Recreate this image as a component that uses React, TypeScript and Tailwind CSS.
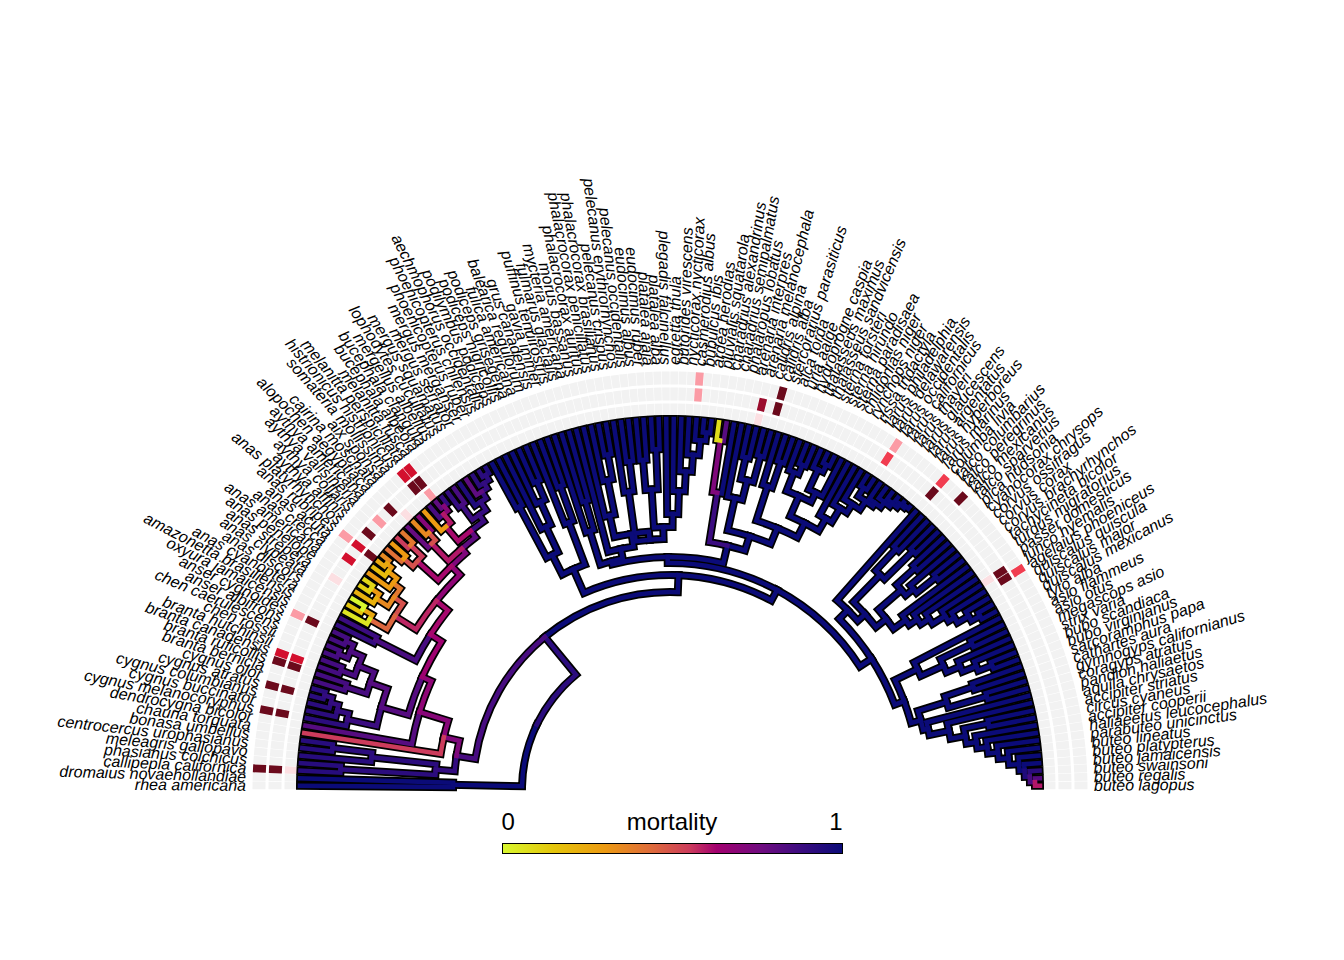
import React from 'react';

// fan phylogeny, mortality coloured branches + 3-column heatmap ring
const CX = 670;
const CY = 789;
const TIP_R = 370;
const LABEL_R = 424;

const TIPS = [
  'rhea americana', 'dromaius novaehollandiae', 'callipepla californica', 'phasianus colchicus',
  'meleagris gallopavo', 'centrocercus urophasianus', 'bonasa umbellus', 'chauna torquata',
  'dendrocygna bicolor', 'cygnus melanocoryphus', 'cygnus buccinator', 'cygnus columbianus',
  'cygnus atratus', 'cygnus olor', 'branta bernicla', 'branta ruficollis', 'branta canadensis',
  'branta hutchinsii', 'chen rossii', 'chen caerulescens', 'anser albifrons', 'anser cygnoides',
  'oxyura jamaicensis', 'amazonetta brasiliensis', 'anas cyanoptera', 'anas discors',
  'anas clypeata', 'anas strepera', 'anas penelope', 'anas americana', 'anas crecca',
  'anas acuta', 'anas rubripes', 'anas platyrhynchos', 'aythya affinis', 'aythya collaris',
  'aythya valisineria', 'aythya americana', 'alopochen aegyptiaca', 'cairina moschata',
  'aix sponsa', 'somateria mollissima', 'histrionicus histrionicus', 'melanitta perspicillata',
  'melanitta fusca', 'bucephala albeola', 'bucephala clangula', 'mergellus albellus',
  'lophodytes cucullatus', 'mergus squamatus', 'mergus serrator', 'mergus merganser',
  'phoenicopterus ruber', 'phoenicopterus chilensis', 'aechmophorus occidentalis',
  'podilymbus podiceps', 'podiceps nigricollis', 'podiceps grisegena', 'fulica americana',
  'balearica regulorum', 'grus canadensis', 'gavia immer', 'puffinus tenuirostris',
  'fulmarus glacialis', 'mycteria americana', 'morus bassanus', 'phalacrocorax auritus',
  'phalacrocorax penicillatus', 'phalacrocorax brasilianus', 'pelecanus crispus',
  'pelecanus erythrorhynchos', 'pelecanus occidentalis', 'eudocimus albus', 'eudocimus ruber',
  'platalea ajaja', 'platalea alba', 'plegadis falcinellus', 'egretta thula',
  'butorides virescens', 'nycticorax nycticorax', 'casmerodius albus', 'bubulcus ibis',
  'ardea herodias', 'pluvialis squatarola',
  'charadrius alexandrinus', 'charadrius semipalmatus', 'phalaropus lobatus',
  'arenaria interpres', 'arenaria melanocephala', 'calidris alpina', 'calidris alba',
  'stercorarius parasiticus', 'alca torda', 'uria aalge', 'hydroprogne caspia',
  'thalasseus maximus', 'thalasseus sandvicensis', 'sterna forsteri', 'sterna hirundo',
  'sterna paradisaea', 'chlidonias niger', 'rynchops niger', 'rissa tridactyla',
  'larus philadelphia', 'larus delawarensis', 'larus occidentalis', 'larus californicus',
  'larus thayeri', 'larus glaucescens', 'larus argentatus', 'larus hyperboreus', 'larus marinus',
  'columba livia', 'falco columbarius', 'falco peregrinus', 'falco mexicanus',
  'falco sparverius', 'pica hudsonia', 'cyanocorax chrysops', 'corvus ossifragus',
  'corvus corax', 'corvus brachyrhynchos', 'tachycineta bicolor', 'turdus migratorius',
  'passer domesticus', 'junco hyemalis', 'agelaius phoeniceus', 'quiscalus quiscula',
  'quiscalus major', 'quiscalus mexicanus', 'tyto alba', 'asio flammeus', 'asio otus',
  'megascops asio', 'strix varia', 'bubo scandiaca', 'bubo virginianus', 'sarcoramphus papa',
  'cathartes aura', 'gymnogyps californianus', 'coragyps atratus', 'pandion haliaetus',
  'aquila chrysaetos', 'accipiter striatus', 'circus cyaneus', 'accipiter cooperii',
  'haliaeetus leucocephalus', 'parabuteo unicinctus', 'buteo lineatus', 'buteo platypterus',
  'buteo jamaicensis', 'buteo swainsoni', 'buteo regalis', 'buteo lagopus',
];

const N = TIPS.length;
const STEP = 179 / (N - 1);
const tipAngle = (i: number) => 179.5 - i * STEP;
const rad = (d: number) => (d * Math.PI) / 180;
const pt = (r: number, th: number): [number, number] => [
  CX + r * Math.cos(rad(th)),
  CY - r * Math.sin(rad(th)),
];

const STOPS: [number, string][] = [
  [0, '#d9f72e'],
  [0.15, '#e4c50b'],
  [0.3, '#ec9a12'],
  [0.44, '#de6a3c'],
  [0.55, '#cc3c5c'],
  [0.63, '#a2006f'],
  [0.76, '#700c80'],
  [0.88, '#3b0c80'],
  [1, '#0b0b78'],
];

const hex = (h: string) => [1, 3, 5].map((k) => parseInt(h.slice(k, k + 2), 16));

function mortalityColor(m: number) {
  for (let i = 1; i < STOPS.length; i++) {
    const [p1, c1] = STOPS[i];
    const [p0, c0] = STOPS[i - 1];
    if (m <= p1) {
      const t = (m - p0) / (p1 - p0);
      const a = hex(c0);
      const b = hex(c1);
      const c = a.map((v, k) => Math.round(v + (b[k] - v) * t));
      return `rgb(${c[0]},${c[1]},${c[2]})`;
    }
  }
  return STOPS[STOPS.length - 1][1];
}

type TreeNode = { r: number; m: number; kids: Array<TreeNode | number> };
const n = (r: number, m: number, ...kids: Array<TreeNode | number>): TreeNode => ({ r, m, kids });

// renumber a subtree's tips (used after inserting tips ahead of it)
const shift = (t: TreeNode, d: number): TreeNode => ({
  r: t.r,
  m: t.m,
  kids: t.kids.map((k) => (typeof k === 'number' ? k + d : shift(k, d))),
});

const LEAF_M: Record<number, number> = { 7: 0.55, 8: 0.82, 22: 0.9, 23: 0.88 };
[0.05, 0.15, 0, 0.22, 0.12, 0.1, 0.3, 0.18, 0.25, 0.35].forEach((m, k) => (LEAF_M[24 + k] = m));
[0.42, 0.3, 0.55, 0.4].forEach((m, k) => (LEAF_M[34 + k] = m));
[0.78, 0.35, 0.7, 0.3, 0.85, 0.8, 0.9, 0.9, 0.85, 0.95, 0.8, 0.92, 0.92, 0.95].forEach(
  (m, k) => (LEAF_M[38 + k] = m),
);
for (let i = 2; i <= 6; i++) LEAF_M[i] = 0.93;
for (let i = 9; i <= 13; i++) LEAF_M[i] = 0.92;
for (let i = 14; i <= 21; i++) LEAF_M[i] = 0.86;
LEAF_M[83] = 0.08;
LEAF_M[84] = 0.82;
LEAF_M[151] = 0.92;
LEAF_M[152] = 0.82;
LEAF_M[153] = 0.6;
const leafM = (i: number) => LEAF_M[i] ?? 1;

// Galloanserae
const GALLI = n(235, 0.9, n(330, 0.92, 2, 3), n(300, 0.92, 4, n(340, 0.92, 5, 6)));
const CYG = n(330, 0.88, 9, n(342, 0.9, 10, n(350, 0.9, 11, n(358, 0.9, 12, 13))));
const GEESE = n(318, 0.82, n(340, 0.85, 14, 15),
  n(335, 0.84, n(350, 0.85, 16, 17), n(348, 0.84, n(358, 0.85, 18, 19), n(356, 0.85, 20, 21))));
const ANAS = n(325, 0.58, n(345, 0.45, 24, n(356, 0.25, 25, 26)),
  n(336, 0.5, n(350, 0.35, 27, n(360, 0.3, 28, 29)),
    n(345, 0.4, 30, n(356, 0.3, 31, n(362, 0.3, 32, 33)))));
const AYTHYA = shift(n(340, 0.62, n(352, 0.5, 32, 33), n(356, 0.55, 34, 35)), 2);
const SEADUCKS = shift(n(318, 0.72,
  n(342, 0.6, 36, n(352, 0.5, 37, 38)),
  n(326, 0.8, n(345, 0.62, 39, n(356, 0.6, 40, n(362, 0.7, 41, 42))),
    n(334, 0.88, n(352, 0.88, 43, 44), n(344, 0.9, 45, n(352, 0.9, 46, n(358, 0.9, 47, n(364, 0.92, 48, 49))))))), 2);
const ANAT = n(272, 0.68, n(300, 0.82, CYG, GEESE),
  n(285, 0.64, n(330, 0.85, 22, 23), n(300, 0.62, ANAS, n(312, 0.68, AYTHYA, SEADUCKS))));
const ANSER = n(232, 0.72, 7, n(262, 0.7, 8, ANAT));
const GALLOANSERAE = n(216, 0.85, GALLI, ANSER);

// Neoaves
const MIRAN = n(262, 1, n(320, 1, 50, 51), n(290, 1, 52, n(315, 1, 53, n(335, 1, 54, 55))));
const GRUI = n(285, 1, 56, n(322, 1, 57, 58));
const MG = shift(n(240, 1, MIRAN, GRUI), 2);
const SULI = n(280, 1, 63, n(315, 1, 64, n(340, 1, 65, 66)));
const PELE = n(250, 1, n(300, 1, 67, n(330, 1, 68, 69)),
  n(262, 1, n(300, 1, n(330, 1, 70, 71), n(340, 1, 72, 73)),
    n(275, 1, 74, n(298, 1, 75, n(318, 1, 76, n(335, 1, 77, n(350, 1, 78, n(358, 1, 79, 80))))))));
const AEQ = shift(n(235, 1, n(270, 1, 59, n(300, 1, 60, 61)), n(245, 1, 62, n(258, 1, SULI, PELE))), 2);
const LARIDAE = n(298, 1,
  n(320, 1, n(340, 1, 90, n(350, 1, 91, 92)), n(330, 1, n(352, 1, 93, n(360, 1, 94, 95)), 96)),
  n(312, 1, 97, n(328, 1, 98, n(338, 1, 99, n(348, 1, n(358, 1, 100, 101),
    n(352, 1, 102, n(358, 1, 103, n(362, 1, 104, n(366, 1, 105, n(368, 1, 106, 107))))))))));
const CHARA = shift(n(250, 1, n(300, 0.88, n(352, 0.72, 79, 80), 81),
  n(265, 1, n(298, 1, 82, n(318, 1, n(340, 1, 83, 84), n(345, 1, 85, 86))),
    n(282, 1, n(318, 1, 87, n(345, 1, 88, 89)), LARIDAE))), 4);

const FALC = n(300, 1, n(330, 1, 109, 110), n(340, 1, 111, 112));
const PASS = n(275, 1, n(305, 1, n(330, 1, 113, 114), n(315, 1, 115, n(340, 1, 116, 117))),
  n(290, 1, 118, n(300, 1, 119, n(310, 1, 120, n(325, 1, 121, n(332, 1, 122, n(345, 1, 123, n(355, 1, 124, 125))))))));
const OWLS = n(275, 1, 126, n(300, 1, n(335, 1, 127, 128), n(315, 1, 129, n(330, 1, 130, n(345, 1, 131, 132)))));
const CATH = n(290, 1, n(320, 1, 133, 134), n(330, 1, 135, 136));
const ACCI = n(265, 1, 137, n(285, 1, 138, n(300, 1, n(325, 1, 139, 140),
  n(310, 1, 141, n(320, 1, 142, n(330, 1, 143, n(340, 1, 144, n(350, 1, 145,
    n(355, 1, 146, n(360, 0.95, 147, n(365, 0.85, 148, 149)))))))))));
const LAND = shift(n(240, 1, n(252, 1, 108, n(262, 1, FALC, PASS)), n(250, 1, OWLS, n(260, 1, CATH, ACCI))), 4);
const REST = n(226, 1, n(232, 1, AEQ, CHARA), LAND);
const NEOAVES = n(214, 1, MG, REST);

const TREE = n(148, 1, n(217, 1, 0, 1), n(197, 0.92, GALLOANSERAE, NEOAVES));

type Edge = { d: string; m: number };

function edgePath(r1: number, th1: number, th2: number, r2: number) {
  const [x1, y1] = pt(r1, th1);
  const [x2, y2] = pt(r1, th2);
  const [x3, y3] = pt(r2, th2);
  const sweep = th2 > th1 ? 0 : 1;
  return `M${x1.toFixed(2)} ${y1.toFixed(2)}A${r1} ${r1} 0 0 ${sweep} ${x2.toFixed(2)} ${y2.toFixed(2)}L${x3.toFixed(2)} ${y3.toFixed(2)}`;
}

function build(node: TreeNode | number, edges: Edge[]): number {
  if (typeof node === 'number') return tipAngle(node);
  const angles = node.kids.map((k) => build(k, edges));
  const th = (angles[0] + angles[angles.length - 1]) / 2;
  node.kids.forEach((k, i) => {
    const r2 = typeof k === 'number' ? TIP_R : k.r;
    const m = typeof k === 'number' ? leafM(k) : k.m;
    edges.push({ d: edgePath(node.r, th, angles[i], r2), m });
  });
  return th;
}

const EDGES: Edge[] = [];
build(TREE, EDGES);
const COLOURED = [...EDGES].sort((a, b) => b.m - a.m);

function arc(r: number, a1: number, a2: number) {
  const [x1, y1] = pt(r, a1);
  const [x2, y2] = pt(r, a2);
  return `M${x1.toFixed(2)} ${y1.toFixed(2)}A${r} ${r} 0 0 1 ${x2.toFixed(2)} ${y2.toFixed(2)}`;
}

// heatmap columns: 0 = outer, 1 = middle, 2 = inner
const BAND_R = [411, 395, 379];
const DR = '#6b0a1c';
const RD = '#d3102e';
const BR = '#f13d50';
const PK = '#fb9ba5';
const LP = '#fcdfe2';
const CELLS: [number, number, string][] = [
  [2, 0, DR], [2, 1, DR], [2, 2, LP],
  [9, 0, DR], [9, 1, DR],
  [12, 0, DR], [12, 1, DR],
  [15, 0, DR], [15, 1, DR], [16, 0, RD], [16, 1, RD],
  [21, 0, PK], [21, 1, DR],
  [27, 1, LP], [30, 1, RD],
  [32, 0, PK], [32, 1, RD], [32, 2, DR],
  [34, 1, DR], [36, 1, PK], [38, 1, DR], [39, 2, LP],
  [42, 0, RD], [43, 0, RD], [42, 1, DR], [43, 1, DR], [43, 2, PK],
  [80, 0, PK], [80, 1, PK],
  [88, 1, '#9a0c2c'], [88, 2, LP], [90, 0, DR], [90, 1, DR],
  [105, 0, PK], [105, 1, BR],
  [112, 0, BR], [112, 1, DR], [115, 0, DR],
  [125, 1, DR], [125, 2, LP], [126, 0, BR], [126, 1, DR],
];

function Tree() {
  return (
    <svg width={1344} height={810} viewBox="0 0 1344 810" className="block">
      {/* grey heatmap cells */}
      {BAND_R.map((r, b) =>
        TIPS.map((_, i) => (
          <path
            key={`g${b}-${i}`}
            d={arc(r, tipAngle(i) + STEP / 2 - 0.04, tipAngle(i) - STEP / 2 + 0.04)}
            stroke="#f2f2f2"
            strokeWidth={13}
            fill="none"
          />
        )),
      )}
      {CELLS.map(([i, b, c], k) => (
        <path
          key={`c${k}`}
          d={arc(BAND_R[b], tipAngle(i) + STEP / 2 - 0.04, tipAngle(i) - STEP / 2 + 0.04)}
          stroke={c}
          strokeWidth={13}
          fill="none"
        />
      ))}

      {/* tree: black casing, then coloured branches */}
      <g fill="none" strokeLinecap="square" strokeLinejoin="miter">
        {EDGES.map((e, k) => (
          <path key={`b${k}`} d={e.d} stroke="#000" strokeWidth={8} />
        ))}
        {COLOURED.map((e, k) => (
          <path key={`e${k}`} d={e.d} stroke={mortalityColor(e.m)} strokeWidth={4.5} />
        ))}
      </g>

      {/* tip labels */}
      <g className="font-['Liberation_Sans',Arial,sans-serif] text-[16px] italic" fill="#000">
        {TIPS.map((name, i) => {
          const th = tipAngle(i);
          const [x, y] = pt(LABEL_R, th);
          const left = th > 90;
          const rot = left ? 180 - th : -th;
          return (
            <text
              key={name}
              x={x}
              y={y}
              dy="0.35em"
              textAnchor={left ? 'end' : 'start'}
              transform={`rotate(${rot.toFixed(2)} ${x.toFixed(2)} ${y.toFixed(2)})`}
            >
              {name}
            </text>
          );
        })}
      </g>
    </svg>
  );
}

export default function App() {
  return (
    <div className="w-[1344px] h-[960px] bg-white flex flex-col items-center overflow-hidden">
      <Tree />
      {/* Legend */}
      <div className="flex flex-col items-center">
        <div className="flex w-[341px] justify-between text-[24px] leading-none text-black font-['Liberation_Sans',Arial,sans-serif]">
          <span>0</span>
          <span>mortality</span>
          <span>1</span>
        </div>
        <div className="mt-[9px] h-[11px] w-[341px] border border-black bg-[linear-gradient(90deg,#d9f72e_0%,#e4c50b_15%,#ec9a12_30%,#de6a3c_44%,#cc3c5c_55%,#a2006f_63%,#700c80_76%,#3b0c80_88%,#0b0b78_100%)]" />
      </div>
    </div>
  );
}
